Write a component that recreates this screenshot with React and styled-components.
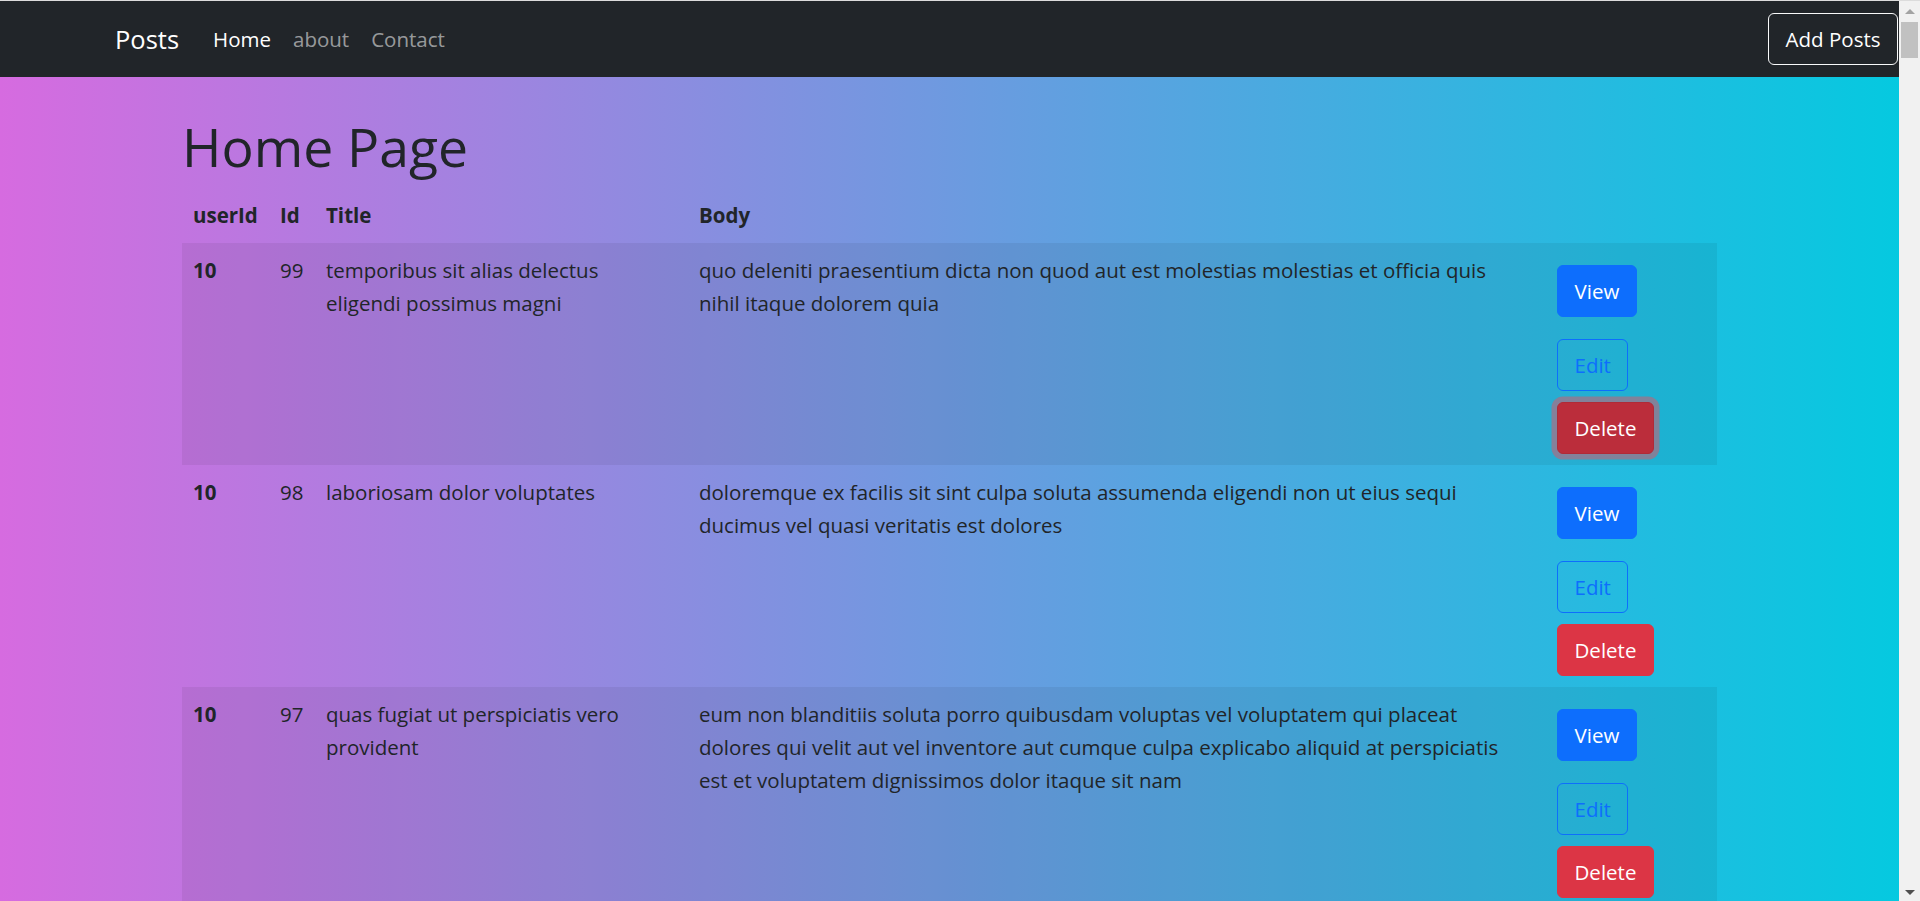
import React from 'react';
import styled, { createGlobalStyle } from 'styled-components';

const posts = [
  {
    userId: 10,
    id: 99,
    title: ['temporibus sit alias delectus', 'eligendi possimus magni'],
    body: ['quo deleniti praesentium dicta non quod aut est molestias molestias et officia quis', 'nihil itaque dolorem quia'],
    focused: true,
  },
  {
    userId: 10,
    id: 98,
    title: ['laboriosam dolor voluptates'],
    body: ['doloremque ex facilis sit sint culpa soluta assumenda eligendi non ut eius sequi', 'ducimus vel quasi veritatis est dolores'],
  },
  {
    userId: 10,
    id: 97,
    title: ['quas fugiat ut perspiciatis vero', 'provident'],
    body: [
      'eum non blanditiis soluta porro quibusdam voluptas vel voluptatem qui placeat',
      'dolores qui velit aut vel inventore aut cumque culpa explicabo aliquid at perspiciatis',
      'est et voluptatem dignissimos dolor itaque sit nam',
    ],
  },
];

const GlobalStyle = createGlobalStyle`
  * { box-sizing: border-box; }
  body {
    margin: 0;
    font-family: "Open Sans", "Noto Sans", sans-serif;
    font-size: 20.5px;
    line-height: 33px;
    color: #212529;
  }
`;

const Shell = styled.div`
  display: flex;
  height: 100vh;
  overflow: hidden;
`;

const Page = styled.div`
  flex: 1;
  min-width: 0;
  overflow: hidden;
  background: linear-gradient(90deg, #d66be0 0%, #05c9e0 100%);
`;

const Scrollbar = styled.div`
  width: 21px;
  flex: none;
  display: flex;
  flex-direction: column;
  align-items: center;
  background: #f1f1f1;
  border-top: 1px solid #dcdcdc;
`;

const Arrow = styled.div`
  width: 0;
  height: 0;
  margin: ${(p) => (p.$down ? 'auto 0 6px' : '8px 0 8px')};
  border-left: 5px solid transparent;
  border-right: 5px solid transparent;
  ${(p) => (p.$down ? 'border-top: 5px solid #505050;' : 'border-bottom: 5px solid #a3a3a3;')}
`;

const Thumb = styled.div`
  width: 17px;
  height: 36px;
  background: #c1c1c1;
`;

const Navbar = styled.nav`
  display: flex;
  align-items: center;
  height: 77px;
  border-top: 1px solid #dcdcdc;
  background: #212529;
  padding: 0 1px 0 115px;
`;

const Brand = styled.a`
  color: #fff;
  font-size: 25.5px;
  line-height: 40px;
  margin-right: 23px;
  text-decoration: none;
`;

const NavLink = styled.a`
  padding: 0 11px;
  font-size: 20.5px;
  color: ${(p) => (p.$active ? '#fff' : 'rgba(255, 255, 255, 0.55)')};
  text-decoration: none;
`;

const AddButton = styled.button`
  margin-left: auto;
  height: 52px;
  padding: 0 16.5px;
  border: 1px solid #f8f9fa;
  border-radius: 6px;
  background: transparent;
  color: #fff;
  font-family: inherit;
  font-size: 20.5px;
`;

const Container = styled.main`
  width: 1535px;
  margin: 0 auto;
`;

const Heading = styled.h1`
  margin: 36px 0 8px 0;
  font-size: 53.5px;
  font-weight: 400;
  line-height: 67px;
`;

const Table = styled.table`
  width: 100%;
  border-collapse: collapse;
  table-layout: fixed;
`;

const Th = styled.th`
  padding: 11px;
  text-align: left;
  font-weight: 700;
  vertical-align: top;
`;

const Td = styled.td`
  padding: 11px;
  vertical-align: top;
`;

const Row = styled.tr`
  background: ${(p) => (p.$striped ? 'rgba(0, 0, 0, 0.06)' : 'transparent')};
`;

const Line = styled.span`
  display: block;
  white-space: nowrap;
`;

const Actions = styled.div`
  display: flex;
  flex-direction: column;
  align-items: flex-start;
`;

const Button = styled.button`
  height: 52px;
  padding: 0 16.5px;
  border-radius: 6px;
  font-family: inherit;
  font-size: 20.5px;
  border: 1px solid ${(p) => p.$border};
  background: ${(p) => p.$bg};
  color: ${(p) => p.$color};
  box-shadow: ${(p) => (p.$focused ? '0 0 0 5.5px rgba(225, 83, 97, 0.5)' : 'none')};
`;

const ViewButton = styled(Button)`
  margin: 11px 0 22px;
`;

const EditButton = styled(Button)`
  margin-bottom: 11px;
`;

function PostRow({ post, striped }) {
  return (
    <Row $striped={striped}>
      <Th>{post.userId}</Th>
      <Td>{post.id}</Td>
      <Td>
        {post.title.map((l, i) => (
          <Line key={i}>{l}</Line>
        ))}
      </Td>
      <Td>
        {post.body.map((l, i) => (
          <Line key={i}>{l}</Line>
        ))}
      </Td>
      <Td>
        <Actions>
          <ViewButton $bg="#0d6efd" $border="#0d6efd" $color="#fff">View</ViewButton>
          <EditButton $bg="transparent" $border="#0d6efd" $color="#0d6efd">Edit</EditButton>
          {post.focused ? (
            <Button $bg="#bb2d3b" $border="#b02a37" $color="#fff" $focused>Delete</Button>
          ) : (
            <Button $bg="#dc3545" $border="#dc3545" $color="#fff">Delete</Button>
          )}
        </Actions>
      </Td>
    </Row>
  );
}

export default function App() {
  return (
    <Shell>
      <GlobalStyle />
      <Page>
        <Navbar>
          <Brand href="#">Posts</Brand>
          <NavLink href="#" $active>Home</NavLink>
          <NavLink href="#">about</NavLink>
          <NavLink href="#">Contact</NavLink>
          <AddButton>Add Posts</AddButton>
        </Navbar>
        <Container>
          <Heading>Home Page</Heading>
          <Table>
            <colgroup>
              <col style={{ width: 87 }} />
              <col style={{ width: 46 }} />
              <col style={{ width: 373 }} />
              <col style={{ width: 858 }} />
              <col />
            </colgroup>
            <thead>
              <tr>
                <Th>userId</Th>
                <Th>Id</Th>
                <Th>Title</Th>
                <Th>Body</Th>
                <Th></Th>
              </tr>
            </thead>
            <tbody>
              {posts.map((p, i) => (
                <PostRow key={p.id} post={p} striped={i % 2 === 0} />
              ))}
            </tbody>
          </Table>
        </Container>
      </Page>
      <Scrollbar>
        <Arrow />
        <Thumb />
        <Arrow $down />
      </Scrollbar>
    </Shell>
  );
}
